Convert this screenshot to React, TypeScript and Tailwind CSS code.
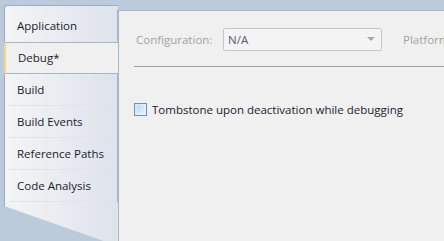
import React from "react";

const tabs = ["Application", "Debug*", "Build", "Build Events", "Reference Paths", "Code Analysis"];

const App = () => {
  const selected = 1;

  return (
    <div
      className="w-[444px] h-[241px] bg-[#bccbdb] flex overflow-hidden text-[11.5px] text-[#1a1a30]"
      style={{ fontFamily: '"Open Sans", "Noto Sans", sans-serif' }}
    >
      {/* Tab strip */}
      <div className="w-[118px] pt-[5px] pl-[4px] shrink-0 relative z-10">
        <div
          className="h-[241px] border-l border-t border-[#9eacbf] rounded-tl-[3px] bg-gradient-to-r from-[#f4f4f4] to-[#dde3ec] pt-[4px]"
          style={{ clipPath: "polygon(0 0, 100% 0, 100% 100%, 0 201px)" }}
        >
          {tabs.map((t, i) =>
            i === selected ? (
              <div
                key={t}
                className="h-[32px] -mr-[1px] flex items-center pl-[12px] bg-[#f0f0f0] border-y border-[#a9b6c7] border-l-2 border-l-[#f3d48a] -ml-[1px]"
              >
                {t}
              </div>
            ) : (
              <div key={t} className="h-[32px] flex flex-col border-r border-[#a9b6c7]">
                <div className="flex-1 flex items-center pl-[12px]">{t}</div>
                {i !== selected - 1 && <div className="h-px mx-[5px] mr-[12px] bg-[#dfe3ea]" />}
              </div>
            )
          )}
        </div>
      </div>

      {/* Page */}
      <div className="flex-1 mt-[10px] bg-[#f0f0f0] border-l border-t border-[#a9b6c7] pl-[15px] pt-[17px]">
        <div className="flex items-center h-[23px]">
          <span className="text-[#a2a2a2] w-[89px] pl-[2px]">Configuration:</span>
          <div className="w-[159px] h-[23px] border border-[#c6c6c6] rounded-[2px] bg-[#f4f4f4] flex items-center pl-[4px] pr-[6px] text-[#5a5a6e]">
            <span className="flex-1">N/A</span>
            <svg width="8" height="5" viewBox="0 0 8 5">
              <path d="M0 0h8L4 4z" fill="#a8a8a8" />
            </svg>
          </div>
          <span className="text-[#a2a2a2] ml-[21px] whitespace-nowrap">Platform:</span>
        </div>
        <div className="h-px bg-[#a0a0a0] mt-[15px]" />
        <label className="flex items-center mt-[34px] gap-[5px]">
          <span className="w-[13px] h-[13px] border border-[#6f91b5] bg-gradient-to-br from-[#cfe4fa] to-[#eef6ff] p-[2px] shrink-0">
            <span className="block w-full h-full bg-gradient-to-br from-[#b9d8f6] to-[#e6f1fd]" />
          </span>
          <span>Tombstone upon deactivation while debugging</span>
        </label>
      </div>
    </div>
  );
};

export default App;
